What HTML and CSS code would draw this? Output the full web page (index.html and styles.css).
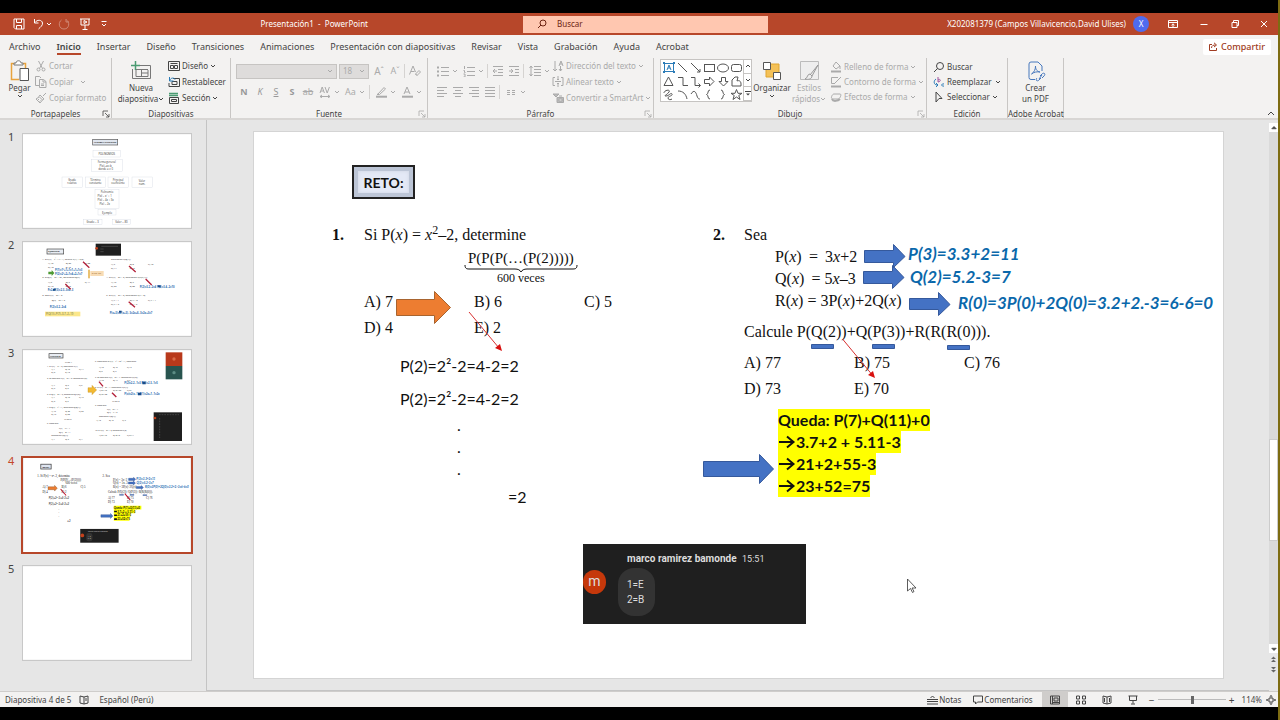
FILE: index.html
```
<!DOCTYPE html>
<html lang="es">
<head>
<meta charset="utf-8">
<title>Presentación1 - PowerPoint</title>
<link rel="stylesheet" href="styles.css">
</head>
<body>
<svg class="defs" aria-hidden="true">
  <symbol id="chev" viewBox="0 0 6 6"><path d="M1 2l2 2 2-2" fill="none" stroke="currentColor"/></symbol>
  <symbol id="launch" viewBox="0 0 8 8"><path d="M1 6V1h5M3 3l4 4M7 4v3H4" fill="none" stroke="currentColor" stroke-width=".8"/></symbol>
  <symbol id="tri" viewBox="0 0 8 8"><path d="M1 3h6L4 6z" fill="currentColor"/></symbol>
</svg>
<div class="window">
<header class="titlebar">
  <div class="tb-left">
    <button class="tb-btn" aria-label="Guardar"><svg width="12" height="12" viewBox="0 0 12 12"><path d="M1 1h10v10H2.500L1 9.500zM3.500 1v3.500h5V1M3.500 11V7.500h5V11"/></svg></button>
    <button class="tb-btn undo" aria-label="Deshacer"><svg width="12" height="12" viewBox="0 0 12 12"><path d="M1.500 1v4h4M2 4.500C4 1.500 9 1.500 9.500 5c.3 2.500-2 4-4 6"/></svg><svg class="chev"><use href="#chev"/></svg></button>
    <button class="tb-btn dim" aria-label="Rehacer"><svg width="12" height="12" viewBox="0 0 12 12"><path d="M3.500 2C0 4 .5 11 6 11s6-7 2.500-9M8 1v3h3"/></svg></button>
    <button class="tb-btn" aria-label="Presentar"><svg width="12" height="12" viewBox="0 0 12 12"><path d="M1 1h10M2 1v6h8V1M6 7v4M3.500 11.500h5M5 2.500v3L8 4z"/></svg></button>
    <button class="tb-btn more" aria-label="Personalizar"><svg width="8" height="8" viewBox="0 0 8 8"><path d="M1.500 1.500h5M2 4l2 2 2-2"/></svg></button>
    <div class="doc-title">Presentación1&nbsp; -&nbsp; PowerPoint</div>
  </div>
  <label class="search"><svg width="10" height="10" viewBox="0 0 10 10"><circle cx="6" cy="4" r="3"/><path d="M4 6L1 9"/></svg><input type="text" aria-label="Buscar" placeholder="Buscar"></label>
  <div class="tb-right">
    <span class="user">X202081379 (Campos Villavicencio,David Ulises)</span>
    <span class="avatar">X</span>
    <button class="tb-win" aria-label="Opciones de cinta"><svg width="10" height="8" viewBox="0 0 10 8"><path d="M.5.500h9v7h-9zM.5 2.500h9M5 7V4M3.500 5.200L5 3.800l1.500 1.400"/></svg></button>
    <button class="tb-win" aria-label="Minimizar"><svg width="10" height="8" viewBox="0 0 10 8"><path d="M1.500 4.500h7"/></svg></button>
    <button class="tb-win" aria-label="Restaurar"><svg width="10" height="8" viewBox="0 0 10 8"><path d="M2 2.500h5v5H2zM3.500 2.500v-2h5v5H7"/></svg></button>
    <button class="tb-win" aria-label="Cerrar"><svg width="10" height="8" viewBox="0 0 10 8"><path d="M2 1l6 6M8 1L2 7"/></svg></button>
  </div>
</header>

<nav class="tabs">
  <button class="t1">Archivo</button><button class="active">Inicio</button><button>Insertar</button><button>Diseño</button><button>Transiciones</button><button>Animaciones</button><button>Presentación con diapositivas</button><button>Revisar</button><button>Vista</button><button>Grabación</button><button>Ayuda</button><button>Acrobat</button>
  <button class="share"><svg width="9" height="9" viewBox="0 0 9 9"><path d="M3 2.500H.5v6h7V6M2.500 6c0-2.500 2-3 4-3M5 .8L7.500 3 5 5"/></svg>Compartir</button>
</nav>

<section class="ribbon">
  <div class="group g-clip">
    <div class="body">
      <button class="big"><svg width="26" height="24" viewBox="0 0 20 22"><path d="M4 3.500H1.500v16H9M13 3.500h2.500V8" stroke="#e8a33d" stroke-width="1.500"/><path d="M4 5V3h2c0-3 5-3 5 0h2v2z" fill="#fff" stroke="#777"/><path d="M10 8.500h8.500v12H10z" fill="#fff" stroke="#555"/></svg><span>Pegar</span><svg class="chev"><use href="#chev"/></svg></button>
      <div class="stack dis">
        <button disabled><svg width="12" height="12" viewBox="0 0 12 12"><path d="M3.500 1l4 7.500M8.500 1l-4 7.500"/><circle cx="3.500" cy="9.500" r="1.500"/><circle cx="8.500" cy="9.500" r="1.500"/></svg>Cortar</button>
        <button disabled><svg width="12" height="12" viewBox="0 0 12 12"><path d="M4 9.500H.5v-9h4L6 2M4.500 3.500h4l2.500 2v6H4.500zM8 3.500V6h3M6 8h3M6 9.500h3"/></svg>Copiar<svg class="chev far"><use href="#chev"/></svg></button>
        <button disabled><svg width="12" height="12" viewBox="0 0 12 12"><path d="M11 1L8 4M5 3l4 4-1.500 1-3.500-3.500zM4 5L1 7l4 4 2.500-3M3 8l1-1M4.500 9.500l1-1" /></svg>Copiar formato</button>
      </div>
    </div>
    <div class="caption">Portapapeles<svg class="launch"><use href="#launch"/></svg></div>
  </div>

  <div class="group g-slides">
    <div class="body">
      <button class="big"><svg width="22" height="22" viewBox="0 0 22 22"><path d="M5 5.500h15.500v13h-18V9M6 9.500h12M6 10v6.500h12V10M11.500 10v6.500M12 13h6" stroke="#777"/><path d="M5.500 1v9M1 5.500h9" stroke="#4a9b72" stroke-width="1.500"/></svg><span>Nueva</span><span>diapositiva<svg class="chev"><use href="#chev"/></svg></span></button>
      <div class="stack">
        <button><svg width="12" height="12" viewBox="0 0 12 12"><path d="M.5 1.500h11v9H.5zM2.500 3.500h7M2.500 5.500h3v3h-3zM6.500 5.500h3v3h-3z"/></svg>Diseño<svg class="chev"><use href="#chev"/></svg></button>
        <button><svg width="12" height="12" viewBox="0 0 12 12"><path d="M5 2.500h6.500v8H1V7M4 5.500h5v3H4z"/><path d="M1.500 1v4h4M2 4.500c.5-3 4-3 5-1" stroke="#2b7cb8"/></svg>Restablecer</button>
        <button><svg width="12" height="12" viewBox="0 0 12 12"><path d="M1 1.500h9M1 3.500h9" stroke="#4a9b72" stroke-width="1.500"/><path d="M1.500 5.500h9v6h-9zM3.500 7.500h5v2h-5z"/></svg>Sección<svg class="chev"><use href="#chev"/></svg></button>
      </div>
    </div>
    <div class="caption">Diapositivas</div>
  </div>

  <div class="group g-font">
    <div class="rows">
      <div class="row">
        <label class="combo font-name"><select aria-label="Fuente" disabled><option></option></select><svg class="chev"><use href="#chev"/></svg></label>
        <label class="combo font-size"><select aria-label="Tamaño" disabled><option>18</option></select><svg class="chev"><use href="#chev"/></svg></label>
        <button class="ic lg" disabled>A<sup>ˆ</sup></button><button class="ic" disabled>A<sup>ˇ</sup></button><i class="sep"></i>
        <button class="ic" disabled aria-label="Borrar formato"><svg width="12" height="12" viewBox="0 0 12 12"><path d="M.5 9.500L4 1l2.500 6M2 6.500h3.500M6.500 9L10 5.500l1.500 1.500L8 10.500zM6.500 9L8 10.500"/></svg></button>
      </div>
      <div class="row r2">
        <button class="ic" disabled><b>N</b></button><button class="ic" disabled><em>K</em></button><button class="ic" disabled><u>S</u></button><button class="ic" disabled><b>S</b></button><button class="ic" disabled><s>ab</s></button>
        <button class="ic wide" disabled aria-label="Espaciado"><svg width="12" height="12" viewBox="0 0 12 12"><path d="M1 7l2.200-6 2.200 6M2 5h2.500M6 1l2.200 6 2.200-6M1 10.500h10M3 9l-2 1.500L3 12M9 9l2 1.500L9 12"/></svg><svg class="chev"><use href="#chev"/></svg></button>
        <button class="ic wide" disabled>Aa<svg class="chev"><use href="#chev"/></svg></button><i class="sep"></i>
        <button class="ic wide" disabled aria-label="Resaltado"><svg width="12" height="12" viewBox="0 0 12 12"><path d="M3 8L9 1.500l1.500 1.500-6 5.500H2z"/><path d="M1 10.700h11" stroke-width="2"/></svg><svg class="chev"><use href="#chev"/></svg></button>
        <button class="ic wide" disabled aria-label="Color de fuente"><svg width="12" height="12" viewBox="0 0 12 12"><path d="M3 8l3-7 3 7M4 6h4"/><path d="M1 10.700h11" stroke-width="2"/></svg><svg class="chev"><use href="#chev"/></svg></button>
      </div>
    </div>
    <div class="caption">Fuente<svg class="launch dim"><use href="#launch"/></svg></div>
  </div>

  <div class="group g-par">
    <div class="body">
      <div class="rows">
        <div class="row">
          <button class="ic wide" disabled aria-label="Viñetas"><svg width="12" height="12" viewBox="0 0 12 12"><path d="M4 2.500h8M4 6.500h8M4 10.500h8"/><path d="M0 2.500h2M0 6.500h2M0 10.500h2" stroke-width="2"/></svg><svg class="chev"><use href="#chev"/></svg></button>
          <button class="ic wide" disabled aria-label="Numeración"><svg width="12" height="12" viewBox="0 0 12 12"><path d="M4 2.500h8M4 6.500h8M4 10.500h8M1.500 1v3M.5 5.500h1v2h1M.5 9h1.500v3H.5"/></svg><svg class="chev"><use href="#chev"/></svg></button><i class="sep"></i>
          <button class="ic" disabled aria-label="Reducir sangría"><svg width="12" height="12" viewBox="0 0 12 12"><path d="M1 1.500h10M6 4.500h5M6 7.500h5M1 10.500h10M5 6H1M3 4L1 6l2 2"/></svg></button>
          <button class="ic" disabled aria-label="Aumentar sangría"><svg width="12" height="12" viewBox="0 0 12 12"><path d="M1 1.500h10M7 4.500h4M7 7.500h4M1 10.500h10M1 6h4M3 4l2 2-2 2"/></svg></button><i class="sep"></i>
          <button class="ic wide" disabled aria-label="Interlineado"><svg width="12" height="12" viewBox="0 0 12 12"><path d="M5 1.500h7M5 4.500h7M5 7.500h7M5 10.500h7M2 1v10M.5 3L2 1l1.500 2M.5 9L2 11l1.500-2"/></svg><svg class="chev"><use href="#chev"/></svg></button>
        </div>
        <div class="row r2">
          <button class="ic" disabled aria-label="Izquierda"><svg width="12" height="12" viewBox="0 0 12 12"><path d="M1 1.500h10M1 4.500h7M1 7.500h10M1 10.500h7"/></svg></button>
          <button class="ic" disabled aria-label="Centrar"><svg width="12" height="12" viewBox="0 0 12 12"><path d="M1 1.500h10M3 4.500h6M1 7.500h10M3 10.500h6"/></svg></button>
          <button class="ic" disabled aria-label="Derecha"><svg width="12" height="12" viewBox="0 0 12 12"><path d="M1 1.500h10M4 4.500h7M1 7.500h10M4 10.500h7"/></svg></button>
          <button class="ic" disabled aria-label="Justificar"><svg width="12" height="12" viewBox="0 0 12 12"><path d="M1 1.500h10M1 4.500h10M1 7.500h10M1 10.500h10"/></svg></button><i class="sep"></i>
          <button class="ic wide" disabled aria-label="Columnas"><svg width="12" height="12" viewBox="0 0 12 12"><path d="M2 4.500h3M2 6.500h3M2 8.500h3M7 4.500h3M7 6.500h3M7 8.500h3" /></svg><svg class="chev"><use href="#chev"/></svg></button>
        </div>
      </div>
      <div class="stack dis">
        <button disabled><svg width="12" height="12" viewBox="0 0 12 12"><path d="M3 1v10M1 9l2 2 2-2M8.500 11V6M7 9l1.500 2L10 9M7 6l2-5 2 5M7.500 4h3"/></svg>Dirección del texto<svg class="chev"><use href="#chev"/></svg></button>
        <button disabled><svg width="12" height="12" viewBox="0 0 12 12"><path d="M3 1.500H1v8h2M9 1.500h2v8H9M6 0v4M6 7v4M3 5.500h6M5 3l1 1 1-1M5 8l1-1 1 1"/></svg>Alinear texto<svg class="chev"><use href="#chev"/></svg></button>
        <button disabled><svg width="12" height="12" viewBox="0 0 12 12"><path d="M1 2h6L4 5zM5 5.500h6.500v5H5zM7 4h3M7 7v2h3V7z" fill="#bbb"/></svg>Convertir a SmartArt<svg class="chev"><use href="#chev"/></svg></button>
      </div>
    </div>
    <div class="caption">Párrafo<svg class="launch dim"><use href="#launch"/></svg></div>
  </div>

  <div class="group g-draw">
    <div class="body">
      <div class="gallery">
        <svg width="82" height="42" viewBox="0 0 82 42">
          <g fill="none" stroke="#555">
            <rect x="3.500" y="3.500" width="9" height="8" stroke="#2b7cb8"/><path d="M6 10l2-5 2 5M7 8h2" stroke="#2b7cb8"/><path d="M2 2h2v2H2zM12 2h2v2h-2zM2 11h2v2H2zM12 11h2v2h-2z" fill="#2b7cb8" stroke="none"/>
            <path d="M17 3l9 9M30 3l9 9M39 9v3h-3"/><rect x="43.500" y="4.500" width="10" height="7"/><ellipse cx="62" cy="8" rx="5.500" ry="4"/><rect x="70.500" y="4.500" width="10" height="7" rx="2"/>
            <path d="M3 25.500L7.500 17l4.500 8.500zM17 17.500h5v8h5M30 17.500h4v8h5M37.500 23.500l2 2-2 2"/><path d="M43.500 19.500h5V17l4.500 4.500-4.500 4.500v-2.500h-5zM60.500 17.500h4v4H67L62.500 26 58 21.500h2.500zM71 26V20l3-3h3l-1 4c2-1 4 0 4 3v2z"/>
            <path d="M3 33c0-3 7-4 5-1s-6 4-3 4 5-4 6-2-4 2-4 4 3 2 4 1M17 31c5 0 8 3 9 8M30 34c3-5 5-2 6 2 1 3 2 3 3 3M49 30c-3 0-1 4-3.500 4.500C48 35 46 39 49 39M60 30c3 0 1 4 3.500 4.500C61 35 63 39 60 39"/><path d="M75.500 29.500l1.500 3.800h4l-3.200 2.200 1.200 4-3.500-2.500-3.500 2.500 1.200-4-3.200-2.200h4z"/>
          </g>
        </svg>
        <div class="gscroll"><button aria-label="Arriba"><svg class="chev up"><use href="#chev"/></svg></button><button aria-label="Abajo"><svg class="chev"><use href="#chev"/></svg></button><button aria-label="Más"><svg class="chev" viewBox="0 0 6 6"><path d="M0 .5h6"/><path d="M1 2.500h4l-2 2z" fill="currentColor" stroke="none"/></svg></button></div>
      </div>
      <button class="big org"><svg width="20" height="22" viewBox="0 0 20 22"><path d="M4 4h13v13H4z" fill="#f4c157" stroke="#e0a52e"/><path d="M1.500 2.500h7v7h-7zM11.500 12.500h7v7h-7z" fill="#fff" stroke="#555"/></svg><span>Organizar</span><svg class="chev"><use href="#chev"/></svg></button>
      <button class="big est" disabled><svg width="20" height="22" viewBox="0 0 20 22"><path d="M1.500 1.500h18v18h-18z" fill="#eee" stroke="#bbb"/><path d="M19 5l-8 10M11 14c-3 0-2 4-5 5 3 1 7 0 7-3zM19 5l-6 11" fill="#eee" stroke="#999"/></svg><span>Estilos</span><span>rápidos<svg class="chev"><use href="#chev"/></svg></span></button>
      <div class="stack dis tight">
        <button disabled><svg width="12" height="12" viewBox="0 0 12 12"><path d="M6 1l4 4-4 3-3-3zM10 5v3"/><path d="M1 10.500h10" stroke-width="2"/></svg>Relleno de forma<svg class="chev"><use href="#chev"/></svg></button>
        <button disabled><svg width="12" height="12" viewBox="0 0 12 12"><path d="M8 1.500H1.500v6H5M11 1L5 7 4 8"/><path d="M1 10.500h10" stroke-width="2"/></svg>Contorno de forma<svg class="chev"><use href="#chev"/></svg></button>
        <button disabled><svg width="12" height="12" viewBox="0 0 12 12"><path d="M4 3h6c2 0 0 5-2 5H3C0 8 2 3 4 3z"/><path d="M2 8c1 3 6 2 8 0" stroke-width="2"/></svg>Efectos de forma<svg class="chev"><use href="#chev"/></svg></button>
      </div>
    </div>
    <div class="caption">Dibujo<svg class="launch dim"><use href="#launch"/></svg></div>
  </div>

  <div class="group g-edit">
    <div class="body">
      <div class="stack tight">
        <button><svg width="12" height="12" viewBox="0 0 12 12"><circle cx="7" cy="5" r="3.500"/><path d="M4.500 7.500L1 11"/></svg>Buscar</button>
        <button><svg width="12" height="12" viewBox="0 0 12 12"><path d="M5 1v5M5 4c3-2 3 2 0 2" stroke="#a0529c"/><path d="M3 3c-3 2-2 6 1 6M3 7l2 2-2 2M11 8c-3-1-3 3 0 2" stroke="#2b7cb8"/></svg>Reemplazar<svg class="chev far"><use href="#chev"/></svg></button>
        <button><svg width="12" height="12" viewBox="0 0 12 12"><path d="M3 1l6 6.500H6L3 11z"/></svg>Seleccionar<svg class="chev"><use href="#chev"/></svg></button>
      </div>
    </div>
    <div class="caption">Edición</div>
  </div>

  <div class="group g-pdf">
    <div class="body">
      <button class="big"><svg width="20" height="22" viewBox="0 0 20 22" ><g stroke="#4778bd"><path d="M9 19.500H5a2 2 0 01-2-2V4a2 2 0 012-2h7l4 4v5M5.500 14c3-2 4-5 4-8 0 4 2 5.500 4.500 6-3-.5-6 0-8.500 2z"/><path d="M11 18c-2 2 0 4 2 2l2-2M14 16l2-2c2-2 4 0 2 2l-2 2M13 19l3-4"/></g></svg><span>Crear</span><span>un PDF</span></button>
    </div>
    <div class="caption">Adobe Acrobat</div>
  </div>
  <button class="collapse" aria-label="Contraer"><svg width="8" height="8" viewBox="0 0 8 8"><path d="M1 6l3-3 3 3"/></svg></button>
</section>

<main class="main">
  <aside class="thumbs">
    <div class="thumb"><span>1</span>
      <svg viewBox="0 0 504 280"><rect width="504" height="280" fill="#fff"/>
        <g fill="#fff" stroke="#ccd3dd"><rect x="210" y="48" width="82" height="20"/><rect x="205" y="76" width="93" height="36"/><rect x="117" y="128" width="61" height="32"/><rect x="187" y="128" width="61" height="32"/><rect x="255" y="128" width="61" height="32"/><rect x="327" y="128" width="61" height="32"/><rect x="216" y="166" width="72" height="56"/><rect x="225" y="226" width="54" height="16"/><rect x="181" y="256" width="56" height="14"/><rect x="268" y="256" width="54" height="14"/></g>
        <rect x="209" y="15" width="75" height="17" fill="#dfe5ee" stroke="#555" stroke-width="2"/>
        <g font-size="8" text-anchor="middle" fill="#333"><text x="246" y="27" font-weight="bold" font-size="7">ALGEBRA SUPERIOR</text><text x="251" y="61" >POLINOMIOS</text><text x="251" y="87">Forma general</text><text x="248" y="97">P(x)=ax+b</text><text x="248" y="107">donde a ≠ 0</text><text x="147" y="139">Grado</text><text x="147" y="149">relativo</text><text x="217" y="139">Término</text><text x="217" y="149">constante</text><text x="285" y="139">Principal</text><text x="285" y="149">coeficiente</text><text x="357" y="142">Valor</text><text x="357" y="152">num.</text><text x="252" y="177">Polinomio</text><text x="245" y="188">P(x) = x² + 1</text><text x="248" y="200">P(x) = 4x + 3x</text><text x="245" y="211">P(x) = 2x</text><text x="252" y="238">Ejemplo</text><text x="209" y="266">Grado = 3</text><text x="295" y="266">Valor = 80</text></g>
      </svg></div>
    <div class="thumb"><span>2</span>
      <svg viewBox="0 0 504 280"><rect width="504" height="280" fill="#fff"/>
        <rect x="72" y="20" width="50" height="15" fill="#e8ecf2" stroke="#444" stroke-width="2"/>
        <rect x="218" y="4" width="76" height="36" fill="#1f1f1f"/><circle cx="221" cy="18" r="4" fill="#c4401b"/><path d="M235 12h50M232 20h10M232 28h10" stroke="#888"/>
        <g font-size="7" fill="#222"><text x="76" y="30" font-weight="bold">EJERCICIO</text>
        <text x="58" y="53">1.  Si P(x) = x² + x + 1, calcule P(1) + P(2).</text><text x="75" y="66">A) 10</text><text x="128" y="66">B) 36</text><text x="185" y="66">C) 38</text><text x="75" y="77">D) 40</text><text x="128" y="77">E) 42</text>
        <text x="58" y="108">2.  Si Q(x) = 2x − 3x, determine Q(P).</text><text x="75" y="121">A) 5</text><text x="128" y="121">B) 7</text><text x="185" y="121">C) 14</text><text x="75" y="133">D) 16</text><text x="128" y="133">E) 10</text>
        <text x="58" y="161">3.  Sea P(x) = 3x − 2</text><text x="86" y="176">Q(x) = 2x + 5</text>
        <text x="264" y="53">Determine P(Q(1)).</text><text x="264" y="67">A) 7</text><text x="320" y="67">B) 8</text><text x="375" y="67">C) 10</text><text x="264" y="80">D) 14</text><text x="320" y="80">E) 15</text><text x="250" y="107">4.  Si P(x) = 3x − 2, determine P(P(P(1))).</text><text x="264" y="121">A) 16</text><text x="320" y="121">B) 7</text><text x="264" y="134">D) 27</text><text x="320" y="134">E) 30</text><text x="250" y="161">5.  Si P(x) = 2x − 3, determine P(x + 3).</text><text x="264" y="175">A) x − 1</text><text x="320" y="175">B) x + 3</text><text x="375" y="175">C) x + 4</text><text x="264" y="187">D) x + 5</text><text x="320" y="187">E) x + 6</text></g>
        <path d="M76 88h10v-5l8 9-8 9v-5H76z" fill="#4e9a35"/><rect x="196" y="82" width="4" height="26" fill="#e0a52e"/><rect x="202" y="86" width="40" height="15" fill="#f8dcb4"/><text x="206" y="96" font-size="7" fill="#8a5a20">3+33=36</text>
        <g font-size="8" font-weight="bold" fill="#1e68ad"><text x="96" y="87">P(1)=1²+1+1=1+1+1=3</text><text x="96" y="98">P(2)=2²+2+1=4+2+1=7</text><text x="74" y="146">P=2+P(3)=2.3−3=6−3</text><text x="80" y="198">P(2)=3.2−2=4</text><text x="350" y="137">P(2)=3.2−2=4  P(4)=3.4−2=10</text><text x="260" y="214">P(x+3)=2.(x+3)−3=2x+6−3=2x+3=7</text></g>
        <rect x="66" y="208" width="106" height="14" fill="#fbe78b"/><text x="69" y="218" font-size="8" fill="#5d6440">P(Q(1))=P(7)=3.7−2=19</text>
        <g stroke="#b3203a" stroke-width="4"><path d="M180 58l19 18M127 125l16 16M318 71l20 18M368 110l18 18M317 178l19 17"/></g><path d="M90 142h8M288 208h8M405 132h8" stroke="#174b8a" stroke-width="6"/>
      </svg></div>
    <div class="thumb"><span>3</span>
      <svg viewBox="0 0 504 280"><rect width="504" height="280" fill="#fff"/>
        <rect x="78" y="10" width="42" height="13" fill="#e8ecf2" stroke="#444" stroke-width="2"/><rect x="428" y="6" width="50" height="41" fill="#b8391b"/><rect x="428" y="47" width="50" height="40" fill="#28544f"/><circle cx="453" cy="26" r="5" fill="#d96a47"/><circle cx="453" cy="67" r="5" fill="#5c8c84"/>
        <rect x="392" y="186" width="85" height="86" fill="#1f1f1f"/><circle cx="396" cy="203" r="4" fill="#c4401b"/><path d="M408 193h60M410 203v60" stroke="#888" stroke-dasharray="5 3"/>
        <g font-size="6" fill="#222"><text x="81" y="19" font-weight="bold">ACTIVIDAD</text><text x="126" y="37">NIVEL 1</text><text x="72" y="49">1.  Si P(x) = 4x − 3, determine P(1).</text><text x="85" y="59">A) 1</text><text x="127" y="59">B) 10</text><text x="168" y="59">C) 11</text><text x="85" y="69">D) 3</text><text x="127" y="69">E) 13</text><text x="72" y="87">2.  Se sabe que P(x) = 2x + 3. Determine P(a)</text><text x="85" y="106">A) 4</text><text x="127" y="106">B) 5</text><text x="168" y="106">C) 6</text><text x="85" y="116">D) 7</text><text x="127" y="116">E) 9</text><text x="72" y="134">3.  Si Q(x) = 3x − 5, determine Q(P(2)).</text><text x="85" y="144">A) 1</text><text x="127" y="144">B) 10</text><text x="168" y="144">C) 15</text><text x="85" y="154">D) 2</text><text x="127" y="154">E) 7</text><text x="72" y="173">4.  Si Q(x) = x² + 1, determine Q(Q(1)).</text><text x="85" y="184">A) 15</text><text x="127" y="184">B) 20</text><text x="168" y="184">C) 26</text><text x="85" y="194">D) 17</text><text x="127" y="194">E) 28</text><text x="124" y="210">NIVEL 2</text><text x="72" y="221">5.  Dado que</text><text x="108" y="236">P(x) = 4x − 1</text><text x="108" y="247">Q(x) = 2x + 1</text><text x="85" y="258">determine P(Q(1)).</text><text x="85" y="269">A) 1</text><text x="127" y="269">B) 2</text><text x="168" y="269">C) 4</text>
        <text x="216" y="36">6.  Determine si P(x) = x² + 3x² + 1, determine</text><text x="228" y="54">A) 10</text><text x="270" y="54">B) 16</text><text x="312" y="54">C) 17</text><text x="228" y="64">D) 5</text><text x="270" y="64">E) 9</text><text x="216" y="82">7.  Se sabe que P(x) = 2x − 1. Determine P(P(2)).</text><text x="228" y="92">A) 10</text><text x="270" y="92">B) 14</text><text x="312" y="92">C) 7</text><text x="216" y="114">8.  Si P(x) = 2x − 1. Determine P(P(1)).</text><text x="228" y="123">A) 2x+10</text><text x="270" y="123">B) 2x+20</text><text x="312" y="123">C) 2x</text><text x="228" y="133">D) 2x+30</text><text x="268" y="154">NIVEL 3</text><text x="216" y="166">9.  Dado que</text><text x="252" y="178">P(x) = 3x − 1</text><text x="252" y="189">Q(x) = x + 2</text><text x="228" y="201">determine P(Q(1)).</text><text x="220" y="212">A) 13</text><text x="258" y="212">B) 15</text><text x="298" y="212">C) 7</text><text x="216" y="242">10.  Si P(x) = 3x + 2, determine P(3).</text><text x="228" y="256">A) 2x+10</text><text x="270" y="256">B) 2x+8</text><text x="312" y="256">C) 6x+1</text></g>
        <path d="M195 112h12v-7l14 14-14 14v-7h-12z" fill="#f2b932" stroke="#b98616"/><g font-size="8" font-weight="bold" fill="#1e68ad"><text x="304" y="102">P(2)=2.2−1=3  P(3)=2.3−1=5</text><text x="304" y="135">P(x)=2(x−1)  P(1)=2x+1−1=2x</text></g><path d="M228 94l12 14M267 127l13 13" stroke="#b3203a" stroke-width="4"/><path d="M358 98h10M345 131h10" stroke="#174b8a" stroke-width="7"/>
      </svg></div>
    <div class="thumb current"><span>4</span>
      <svg viewBox="0 0 969 546"><rect width="969" height="546" fill="#fff"/>
        <rect x="100" y="36" width="60" height="28" fill="#dfe5f0" stroke="#333" stroke-width="4"/>
        <g font-family="Liberation Serif" font-size="17" fill="#111"><text x="80" y="109">1.   Si P(x) = x²−2, determine</text><text x="214" y="131">P(P(P(…(P(2)))))</text><text x="244" y="151">600 veces</text><text x="110" y="175">A) 7</text><text x="220" y="175">B) 6</text><text x="330" y="175">C) 5</text><text x="110" y="202">D) 4</text><text x="220" y="202">E) 2</text><text x="459" y="109">2.   Sea</text><text x="520" y="131">P(x) = 3x+2</text><text x="520" y="153">Q(x) = 5x−3</text><text x="520" y="175">R(x) = 3P(x)+2Q(x)</text><text x="490" y="205">Calcule P(Q(2))+Q(P(3))+R(R(R(0))).</text><text x="490" y="236">A) 77</text><text x="601" y="236">B) 75</text><text x="711" y="236">C) 76</text><text x="490" y="262">D) 73</text><text x="601" y="262">E) 70</text></g>
        <g font-family="Lato" font-size="16" fill="#111"><text x="110" y="56" font-weight="bold" font-size="14">RETO:</text><text x="146" y="240">P(2)=2²-2=4-2=2</text><text x="146" y="273">P(2)=2²-2=4-2=2</text><text x="203" y="300">.</text><text x="203" y="322">.</text><text x="203" y="344">.</text><text x="254" y="371">=2</text></g>
        <path d="M524 277h160v22h-36v22h-27v22h-6v22h-91z" fill="#ff0"/><g font-family="Lato" font-weight="bold" font-size="16" fill="#111"><text x="524" y="295">Queda: P(7)+Q(11)+0</text><text x="544" y="317">3.7+2 + 5.11-3</text><text x="544" y="339">21+2+55-3</text><text x="544" y="361">23+52=75</text></g><path d="M526 311h16M526 333h16M526 355h16" stroke="#111" stroke-width="9"/>
        <g font-family="Lato" font-style="italic" font-weight="bold" font-size="17" fill="#1266b0"><text x="654" y="128">P(3)=3.3+2=11</text><text x="656" y="151">Q(2)=5.2-3=7</text><text x="705" y="177">R(0)=3P(0)+2Q(0)=3.2+2.-3=6-6=0</text></g>
        <path d="M142 167h38v-8l16 16.500-16 16.500v-8h-38z" fill="#ed7d31" stroke="#7a4a20" stroke-width="2"/>
        <g fill="#4472c4" stroke="#2a4a87" stroke-width="2"><path d="M610 118h29v-6l12 12-12 11v-5h-29zM609 139h29v-5l12 11-12 12v-6h-29zM655 166h29v-6l12 12-12 11v-6h-29zM449 329h56v-7l14 15-14 14v-7h-56zM557 212h23v5h-23zM618 212h23v5h-23zM693 213h23v5h-23z"/></g>
        <g stroke="#c0142c" stroke-width="6"><path d="M215 180l32 38M588 207l32 38"/></g>
        <rect x="329" y="412" width="223" height="80" fill="#1f1f1f"/><circle cx="341" cy="450" r="11" fill="#c4401b"/><text x="374" y="431" fill="#ccc" font-size="10">marco ramirez bamonde</text><rect x="364" y="436" width="36" height="48" rx="14" fill="#333"/><text x="373" y="457" fill="#ddd" font-size="10">1=E</text><text x="373" y="472" fill="#ddd" font-size="10">2=B</text>
      </svg></div>
    <div class="thumb"><span>5</span><svg viewBox="0 0 504 280"><rect width="504" height="280" fill="#fff"/></svg></div>
  </aside>

  <section class="canvas">
    <article class="slide">
      <div class="reto">RETO:</div>
      <div class="m p1n"><b>1.</b></div>
      <div class="m p1a">Si P(<i>x</i>) = <i>x</i><sup>2</sup>–2, determine</div>
      <div class="m p1b">P(P(P(…(P(2)))))</div>
      <div class="m p1c">600 veces</div>
      <div class="opts o1"><span>A) 7</span><span>B) 6</span><span>C) 5</span><span>D) 4</span><span>E) 2</span></div>
      <div class="c work"><p>P(2)=2²-2=4-2=2</p><p>P(2)=2²-2=4-2=2</p></div>
      <div class="c dots"><p>.</p><p>.</p><p>.</p></div>
      <div class="c res">=2</div>

      <div class="m p2n"><b>2.</b></div>
      <div class="m p2a">Sea</div>
      <div class="m p2b"><p>P(<i>x</i>)&thinsp; =&thinsp; 3<i>x</i>+2</p><p>Q(<i>x</i>)&thinsp; = 5<i>x</i>–3</p><p>R(<i>x</i>) = 3P(<i>x</i>)+2Q(<i>x</i>)</p></div>
      <div class="m p2c">Calcule P(Q(2))+Q(P(3))+R(R(R(0))).</div>
      <div class="opts o2"><span>A) 77</span><span>B) 75</span><span>C) 76</span><span>D) 73</span><span>E) 70</span></div>
      <div class="blue b1">P(3)=3.3+2=11</div>
      <div class="blue b2">Q(2)=5.2-3=7</div>
      <div class="blue b3">R(0)=3P(0)+2Q(0)=3.2+2.-3=6-6=0</div>
      <div class="queda"><p><mark>Queda: P(7)+Q(11)+0</mark></p><p><mark><svg width="18" height="14" viewBox="0 0 18 14"><path d="M1 7h14M9 1.500L15.500 7 9 12.500"/></svg>3.7+2 + 5.11-3</mark></p><p><mark><svg width="18" height="14" viewBox="0 0 18 14"><path d="M1 7h14M9 1.500L15.500 7 9 12.500"/></svg>21+2+55-3</mark></p><p><mark><svg width="18" height="14" viewBox="0 0 18 14"><path d="M1 7h14M9 1.500L15.500 7 9 12.500"/></svg>23+52=75</mark></p></div>

      <div class="chat"><div class="who"><b>marco ramirez bamonde</b> <span>15:51</span></div><div class="msg"><span class="ava">m</span><p class="bubble">1=E<br>2=B</p></div></div>

      <svg class="shapes" width="969" height="546" viewBox="0 0 969 546">
        <path d="M211 133c0 4 2 4 5 4h45c3 0 5 1 6 3 1-2 3-3 6-3h45c3 0 5 0 5-4" fill="none" stroke="#111"/>
        <path d="M142.500 167.500h38v-8l16 16-16 16v-8h-38z" fill="#ed7d31" stroke="#a8642f"/>
        <g fill="#4472c4" stroke="#35599c"><path d="M610.500 118.500h29v-6l11.500 12-11.500 11v-5h-29zM609.500 139.500h29v-6l11.500 12-11.500 11v-5h-29zM655.500 166.500h29v-6l11.500 12-11.500 11v-6h-29zM449.500 329.500h56v-7l14 14.500-14 14.500v-7h-56zM557.500 212.500h22v4h-22zM618.500 212.500h22v4h-22zM693.500 213.500h22v4h-22z"/></g>
        <g stroke="#d8302f" fill="#d8100f"><path d="M215 180l30 36M588.500 207l29 35" fill="none"/><path d="M248 219l-7-3 5-4zM621 246l-7-3 5-4z" stroke="none"/></g>
        <path d="M653.500 447v12l3-2.500 2 4 1.500-1-2-3.500h4z" fill="#fff" stroke="#333" stroke-width=".8"/>
      </svg>
    </article>
  </section>
  <div class="vscroll"><button aria-label="Subir"><svg class="chev up"><use href="#tri"/></svg></button><div class="track"><div class="knob"></div></div><button aria-label="Bajar"><svg class="chev"><use href="#tri"/></svg></button>
    <button class="flat" aria-label="Anterior"><svg width="7" height="8" viewBox="0 0 7 8"><path d="M1 4l2.500-2.500L6 4zM1 7l2.500-2.500L6 7z"/></svg></button><button class="flat" aria-label="Siguiente"><svg width="7" height="8" viewBox="0 0 7 8"><path d="M1 1l2.500 2.500L6 1zM1 4l2.500 2.500L6 4z"/></svg></button></div>
</main>

<footer class="status">
  <span class="st-slide">Diapositiva 4 de 5</span>
  <svg width="10" height="10" viewBox="0 0 10 10"><path d="M5 2L1 1v7l4 1 4-1V1zM5 2v7M7 3v3"/></svg>
  <span class="st-lang">Español (Perú)</span>
  <button class="notes"><svg width="11" height="10" viewBox="0 0 11 10"><path d="M0 4.500h11M0 6.500h11M0 9h11M3.500 3l2-2 2 2"/></svg>Notas</button>
  <button class="comm"><svg width="10" height="10" viewBox="0 0 10 10"><path d="M.5 1h9v6h-5L2.500 9V7h-2z"/></svg>Comentarios</button>
  <button class="view on" aria-label="Normal"><svg width="10" height="10" viewBox="0 0 10 10"><path d="M.5 1h9v8h-9zM2.500 1v8M4 3h4v3H4zM2.500 7.500h7"/></svg></button>
  <button class="view" aria-label="Clasificador"><svg width="10" height="10" viewBox="0 0 10 10"><path d="M.5 1h3v3h-3zM6.500 1h3v3h-3zM.5 6h3v3h-3zM6.500 6h3v3h-3z"/></svg></button>
  <button class="view" aria-label="Lectura"><svg width="10" height="10" viewBox="0 0 10 10"><path d="M5 2L1 1v7l4 1 4-1V1zM5 2v7M2.500 3v4M7.500 3v4"/></svg></button>
  <button class="view" aria-label="Presentación"><svg width="10" height="10" viewBox="0 0 10 10"><path d="M.5 1h9M1.500 1v4.500h7V1M5 5.500v3M3 9h4"/></svg></button>
  <button class="zm" aria-label="Alejar">−</button><input type="range" aria-label="Zoom" min="0" max="100" value="52"><button class="zm" aria-label="Acercar">+</button>
  <span class="pct">114%</span>
  <button class="fit" aria-label="Ajustar"><svg width="10" height="10" viewBox="0 0 10 10"><path d="M3 3h4v4H3zM5 .5v2M5 7.500v2M.5 5h2M7.500 5h2M4 1.500l1-1 1 1M4 8.500l1 1 1-1M1.500 4l-1 1 1 1M8.500 4l1 1-1 1"/></svg></button>
</footer>
</div>
</body>
</html>
```

FILE: styles.css
```
* { box-sizing: border-box; }
body { margin: 0; background: #000; color: #444; font: 9px/12px "Noto Sans", sans-serif; }
button, input, select { font: inherit; color: inherit; }
button { border: 0; background: none; padding: 0; margin: 0; white-space: nowrap; display: inline-flex; align-items: center; }
p { margin: 0; }
svg { flex: none; fill: none; stroke: currentColor; }
.defs { position: absolute; width: 0; height: 0; }
.chev { width: 6px; height: 6px; }
.up { transform: rotate(180deg); }
.window { min-height: 100vh; display: flex; flex-direction: column; padding: 13px 0; border-right: 2px solid #7d6c12; background: #000; }

.titlebar { height: 22px; background: #b7472a; color: #fff; display: grid; grid-template-columns: 523fr 245fr 510fr; align-items: center; font-size: 8px; }
.tb-left { display: flex; align-items: center; padding-left: 13px; gap: 9px; }
.tb-left .undo { gap: 1px; margin-left: -1px; }
.tb-left .dim { opacity: .35; margin-left: -3px; }
.doc-title { margin-left: auto; padding-right: 155px; }
.search { display: flex; align-items: center; gap: 10px; height: 17px; padding-left: 14px; background: #ffc7b0; color: #6d2413; }
.search input { border: 0; background: none; outline: 0; padding: 0; flex: 1; min-width: 0; }
.search input::placeholder { color: #6d2413; opacity: 1; }
.tb-right { display: flex; align-items: center; justify-content: flex-end; white-space: nowrap; }
.avatar { width: 16px; height: 16px; margin: 0 8px 0 7px; border-radius: 8px; background: #4f6bed; text-align: center; line-height: 16px; }
.tb-win { width: 31px; justify-content: center; }
.tb-win:last-child { width: 28px; }

.tabs { height: 23px; background: #f3f2f1; display: flex; align-items: center; gap: 16px; padding: 0 7px 0 9px; }
.tabs button { height: 16px; }
.tabs .active { font-weight: 600; border-bottom: 2px solid #b7472a; padding-top: 2px; }
.tabs .share { margin-left: auto; height: 16px; padding: 0 6px; gap: 3px; background: #fff; font-weight: 500; border-radius: 2px; color: #a03c22; }

.ribbon { background: #f3f2f1; display: flex; height: 62px; border-bottom: 2px solid #d8d6d4; position: relative; font-size: 8px; }
.group { display: flex; flex-direction: column; justify-content: space-between; border-right: 1px solid #c8c6c4; height: 60px; }
.g-clip { width: 112px; } .g-slides { width: 119px; } .g-font { width: 197px; } .g-par { width: 226px; }
.g-draw { width: 273px; } .g-edit { width: 81px; } .g-pdf { width: 56px; }
.body { display: flex; height: 48px; }
.caption { text-align: center; position: relative; height: 12px; line-height: 16px; white-space: nowrap; }
.launch { position: absolute; right: 1px; top: 4px; width: 8px; height: 8px; }
.launch.dim { color: #aaa; }
.big { flex-direction: column; line-height: 11px; }
.big > svg:first-child { margin: 2px 0 0; height: 22px; }
.big:disabled { color: #aaa; }
.g-clip .big { width: 27px; margin-left: 6px; }
.g-clip .stack { margin-left: 2px; }
.g-slides .big { width: 46px; margin-left: 6px; margin-right: 4px; }
.stack { display: flex; flex-direction: column; }
.stack button { height: 16px; gap: 2px; }
.stack .far { margin-left: 4px; }
.g-edit .stack .far { margin-left: 1px; }
.tight button { height: 15px; }
.tight { padding-top: 1px; }
.dis, .dis button, .ic { color: #aaa; }
.rows { padding: 4px 0 0 5px; }
.g-par .rows { width: 124px; flex: none; padding-left: 6px; }
.row { display: flex; height: 18px; align-items: center; }
.row + .row { margin-top: 3px; }
.ic { width: 16px; height: 16px; justify-content: center; font-size: 9px; }
.ic.lg { font-size: 10px; }
.ic.wide { width: 26px; gap: 3px; }
.ic b, .ic em, .ic u { color: #999; }
.ic sup { font-size: 8px; line-height: 0; }
.sep { width: 1px; height: 14px; margin: 0 2px 0 1px; background: #d5d3d1; }
.combo { display: flex; align-items: center; height: 15px; margin-right: 2px; padding: 0 3px; border: 1px solid #c6c4c2; background: #dedcdb; color: #aaa; }
.combo select { appearance: none; flex: 1; min-width: 0; padding: 0; border: 0; background: none; opacity: 1; }
.font-name { width: 101px; } .font-size { width: 30px; }
.gallery { display: flex; width: 92px; height: 43px; margin: 1px 0 0 6px; border: 1px solid #c6c4c2; background: #fff; flex: none; overflow: hidden; }
.gscroll { flex: 1; display: flex; flex-direction: column; border-left: 1px solid #c6c4c2; }
.gscroll button { flex: 1; justify-content: center; border-bottom: 1px solid #c6c4c2; }
.org { width: 36px; margin-left: 2px; }
.est { width: 34px; margin-left: 2px; margin-right: 4px; }
.g-edit .stack { margin-left: 6px; }
.g-pdf .big { width: 55px; }
.collapse { position: absolute; right: 3px; bottom: 1px; }

.main { flex: 1; display: flex; background: #e6e6e6; }
.thumbs { width: 207px; border-right: 1px solid #c4c4c4; padding: 13px 0 0 8px; display: flex; flex-direction: column; gap: 12px; }
.thumb { display: flex; height: 96px; font-size: 11px; line-height: 8px; }
.thumb span { width: 14px; }
.thumb svg { width: 170px; height: 96px; border: 1px solid #c8c8c8; stroke: none; font-family: "Open Sans", sans-serif; }
.thumb.current span { color: #c4472a; }
.thumb.current svg { outline: 2px solid #b7472a; outline-offset: -1px; }
.canvas { flex: 1; padding: 12px 46px 12px 47px; border-bottom: 1px solid #c4c4c4; display: flex; }
.slide { flex: 1; min-height: 546px; background: #fff; position: relative; color: #111; outline: 1px solid #d4d4d4; }
.slide > * { position: absolute; white-space: nowrap; }
.shapes { left: 0; top: 0; stroke: none; pointer-events: none; }
.m, .opts { font: 16px/22px "Liberation Serif", serif; }
.m sup { font-size: 12px; line-height: 0; }
.c { font: 16px/22px Lato, sans-serif; }
.reto { left: 98px; top: 33px; width: 63px; height: 34px; border: 2px solid #222; box-shadow: inset 0 0 0 4px #bcc5d6, inset 0 0 3px 5px #d6dcea; background: #e4e9f6; font: bold 14px/32px Lato, sans-serif; text-align: center; }
.p1n { left: 78px; top: 92px; } .p1a { left: 110px; top: 92px; }
.p1b { left: 214px; top: 115px; font-size: 15px; } .p1c { left: 243px; top: 135px; font-size: 12px; }
.opts { display: grid; grid-template-columns: 110px 110px 50px; row-gap: 4px; }
.o1 { left: 110px; top: 159px; } .o2 { left: 490px; top: 220px; }
.work { left: 146px; top: 223px; display: grid; row-gap: 11px; }
.dots { left: 203px; top: 282px; } .res { left: 254px; top: 354px; }
.p2n { left: 459px; top: 92px; } .p2a { left: 490px; top: 92px; }
.p2b { left: 521px; top: 114px; } .p2c { left: 490px; top: 189px; }
.blue { font: italic bold 17px/22px Lato, sans-serif; color: #0a68ab; }
.b1 { left: 654px; top: 111px; } .b2 { left: 656px; top: 134px; } .b3 { left: 704px; top: 160px; }
.queda { left: 524px; top: 277px; font: bold 16px/22px Lato, sans-serif; }
.queda mark { display: inline-block; background: #ff0; color: #111; height: 22px; }
.queda svg { stroke-width: 2; vertical-align: -1px; }
.chat { left: 329px; top: 412px; width: 223px; height: 80px; background: #1f1f1f; color: #ddd; font: 10px/15px Roboto, sans-serif; }
.who { padding: 7px 0 0 44px; height: 24px; }
.who span { font-size: 9px; margin-left: 3px; }
.msg { display: flex; gap: 12px; }
.ava { width: 23px; height: 24px; margin-top: 2px; border-radius: 12px; background: #c5380b; font-size: 14px; line-height: 23px; text-align: center; }
.bubble { width: 37px; height: 48px; padding: 9px; border-radius: 16px; background: #333; }

.vscroll { width: 9px; display: flex; flex-direction: column; padding: 3px 0 16px; background: #e6e6e6; }
.vscroll button { height: 9px; background: #fff; justify-content: center; }
.vscroll .flat { background: none; height: 11px; }
.flat svg { fill: #666; stroke: none; }
.track { flex: 1; background: #dadada; padding-top: 307px; }
.knob { height: 102px; background: #fff; border: 1px solid #ccc; }

.status { height: 16px; background: #f3f2f1; border-top: 1px solid #cfcdcb; display: flex; align-items: center; padding: 0 2px 0 5px; font-size: 8px; }
.st-lang { margin: 0 auto 0 10px; }
.st-slide { margin-right: 8px; }
.status button { gap: 1px; }
.comm { margin: 0 9px 0 12px; }
.status .view { width: 26px; height: 15px; justify-content: center; }
.status .on { background: #cfcdcb; }
.zm { width: 12px; justify-content: center; font-size: 10px; }
.status input { appearance: none; width: 68px; height: 10px; margin: 0; background: linear-gradient(#bbb, #bbb) center / 100% 1px no-repeat; }
.status input::-webkit-slider-thumb { appearance: none; width: 3px; height: 8px; background: #666; }
.pct { margin: 0 4px; }
```
